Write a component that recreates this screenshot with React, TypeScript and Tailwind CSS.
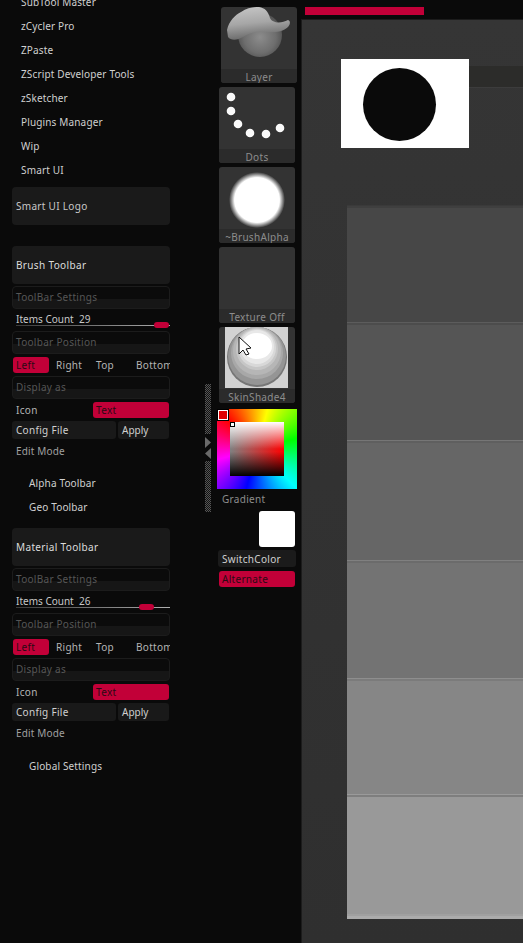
import React from "react";

const font = "font-['Noto_Sans','DejaVu_Sans',sans-serif]";

const plugins = ["zCycler Pro", "ZPaste", "ZScript Developer Tools", "zSketcher", "Plugins Manager", "Wip", "Smart UI"];

const Divider = ({ label }: { label: string }) => (
  <div className="h-[23px] rounded-[4px] border border-[#1c1c1c] bg-[linear-gradient(#0b0b0b_0_55%,#161616_55%)] pl-[3px] text-[10px] leading-[20px] tracking-[0.3px] text-[#565656]">
    {label}
  </div>
);

const ToolbarGroup = ({ title, count, thumb }: { title: string; count: number; thumb: string }) => (
  <div className="flex w-[158px] flex-col">
    <div className="flex h-[38px] items-center rounded-[4px] bg-[#1a1a1a] pl-1 text-[10px] tracking-[0.35px] text-[#dcdcdc]">{title}</div>
    <div className="mt-[2px]">
      <Divider label="ToolBar Settings" />
    </div>
    <div className="h-[22px] pl-1 pt-[3px] text-[10px] leading-[15px] text-[#c8c8c8]">
      Items Count&nbsp; {count}
      <div className="relative -mt-[2px] h-px bg-[linear-gradient(to_right,#3a3a3a,#b0b0b0)]">
        <div className={`absolute top-[-3px] h-[6px] w-[15px] rounded-[3px] bg-[#c20038] ${thumb}`} />
      </div>
    </div>
    <Divider label="Toolbar Position" />
    <div className="mt-[3px] flex h-4 items-center overflow-hidden text-[10px] tracking-[0.3px] text-[#b4b4b4]">
      <div className="ml-px h-4 w-9 shrink-0 rounded-[3px] bg-[#c20038] pl-[3px] leading-[16px] text-[#2a0a14]">Left</div>
      <div className="ml-[7px] w-10 shrink-0">Right</div>
      <div className="w-10 shrink-0">Top</div>
      <div className="shrink-0">Bottom</div>
    </div>
    <div className="mt-[3px]">
      <Divider label="Display as" />
    </div>
    <div className="mt-[3px] flex h-4 items-center text-[10px] tracking-[0.3px] text-[#b4b4b4]">
      <div className="w-[81px] pl-1">Icon</div>
      <div className="h-4 w-[76px] rounded-[3px] bg-[#c20038] pl-[3px] leading-[16px] text-[#2a0a14]">Text</div>
    </div>
    <div className="mt-[3px] flex h-[18px] gap-[2px] text-[10px] leading-[18px] text-[#d0d0d0]">
      <div className="w-[104px] rounded-[3px] bg-[#191919] pl-[4px] tracking-[0.3px]">Config File</div>
      <div className="w-[51px] rounded-[3px] bg-[#191919] pl-1">Apply</div>
    </div>
    <div className="h-[20px] pl-1 text-[10px] leading-[24px] tracking-[0.15px] text-[#a0a0a0]">Edit Mode</div>
  </div>
);

const PluginRow = ({ label, inset = "pl-[21px]" }: { label: string; inset?: string }) => (
  <div className={`flex h-6 items-center text-[10px] tracking-[0.15px] text-[#d0d0d0] ${inset}`}>{label}</div>
);

const Tile = ({ label, x = "", children }: { label: string; x?: string; children?: React.ReactNode }) => (
  <div className={`relative h-[76px] w-[76px] overflow-hidden rounded-[3px] bg-[#333333] ${x}`}>
    <div className="flex h-[62px] items-center justify-center">{children}</div>
    <div className="h-[14px] bg-[#2b2b2b] text-center text-[10px] leading-[16px] tracking-[0.3px] text-[#8d8d8d]">{label}</div>
  </div>
);

const Hatch = ({ className }: { className: string }) => (
  <div className={`w-[6px] bg-[repeating-conic-gradient(#555_0_25%,#111_0_50%)] bg-[length:2px_2px] ${className}`} />
);

const bands = [
  { h: "h-[117px]", c: "bg-[#474747]", a: "bg-[#3a3a3a]", b: "bg-[#3f3f3f]" },
  { h: "h-[118px]", c: "bg-[#555555]", a: "bg-[#5c5c5c]", b: "bg-[#4c4c4c]" },
  { h: "h-[120px]", c: "bg-[#666666]", a: "bg-[#767676]", b: "bg-[#5f5f5f]" },
  { h: "h-[118px]", c: "bg-[#737373]", a: "bg-[#808080]", b: "bg-[#6b6b6b]" },
  { h: "h-[116px]", c: "bg-[#868686]", a: "bg-[#8e8e8e]", b: "bg-[#7b7b7b]" },
  { h: "h-[125px]", c: "bg-[#999999]", a: "bg-[#9a9a9a]", b: "bg-[#7e7e7e]" },
];

export default function App() {
  return (
    <div className={`flex h-[943px] w-[523px] overflow-hidden bg-[#0a0a0a] ${font}`}>
      {/* left plugin list */}
      <div className="w-[205px] shrink-0 pl-3">
        <div className="-ml-3 -mt-[10px]">
          <PluginRow label="SubTool Master" />
          {plugins.map((p) => (
            <PluginRow key={p} label={p} />
          ))}
        </div>
        <div className="mt-[5px] flex h-[38px] w-[158px] items-center rounded-[4px] bg-[#1a1a1a] pl-1 text-[10px] tracking-[0.3px] text-[#c8c8c8]">Smart UI Logo</div>
        <div className="mt-[21px]">
          <ToolbarGroup title="Brush Toolbar" count={29} thumb="right-px" />
        </div>
        <div className="-ml-3 mt-[12px]">
          <PluginRow label="Alpha Toolbar" inset="pl-[29px]" />
          <PluginRow label="Geo Toolbar" inset="pl-[29px]" />
        </div>
        <div className="mt-[9px]">
          <ToolbarGroup title="Material Toolbar" count={26} thumb="left-[123px]" />
        </div>
        <div className="-ml-3 mt-[13px]">
          <PluginRow label="Global Settings" inset="pl-[29px]" />
        </div>
      </div>

      {/* splitter */}
      <div className="flex w-[14px] shrink-0 flex-col pt-[384px]">
        <Hatch className="h-[50px]" />
        <svg width="6" height="22" viewBox="0 0 6 22" className="mt-[3px]">
          <path d="M0 0 L6 5.5 L0 11 Z" fill="#6a6a6a" />
          <path d="M6 11 L0 16.5 L6 22 Z" fill="#6a6a6a" />
        </svg>
        <Hatch className="mt-[2px] h-[51px]" />
      </div>

      {/* brush tiles */}
      <div className="flex w-[82px] shrink-0 flex-col pt-[7px]">
        <Tile label="Layer" x="ml-[2px]">
          <svg width="76" height="62" viewBox="0 0 76 62">
            <defs>
              <linearGradient id="cap" x1="0" y1="0" x2="0.2" y2="1">
                <stop offset="0" stopColor="#c8c8c8" />
                <stop offset="0.55" stopColor="#a6a6a6" />
                <stop offset="1" stopColor="#6c6c6c" />
              </linearGradient>
              <radialGradient id="ball" cx="0.5" cy="0.55" r="0.6">
                <stop offset="0" stopColor="#8c8c8c" />
                <stop offset="0.6" stopColor="#6e6e6e" />
                <stop offset="1" stopColor="#464646" />
              </radialGradient>
            </defs>
            <circle cx="39" cy="28" r="22" fill="url(#ball)" />
            <path d="M6 23 C8 14 14 8 20 5 C26 1 32 0 38 0 C44 1 47 4 49 11 C51 16 60 17 67 13 C70 14 69 18 67 20 C62 25 52 26 42 25 C34 24 28 26 22 30 C17 33 10 34 7 30 Z" fill="url(#cap)" />
          </svg>
        </Tile>
        <div className="h-1" />
        <Tile label="Dots">
          <svg width="76" height="62" viewBox="0 0 76 62">
            {[[12, 10], [12, 24], [19, 37], [31, 46], [47, 47], [61, 41]].map(([cx, cy]) => (
              <circle key={cy} cx={cx} cy={cy} r="4.3" fill="#fafafa" />
            ))}
          </svg>
        </Tile>
        <div className="h-1" />
        <Tile label="~BrushAlpha">
          <div className="mt-1 h-[56px] w-[56px] rounded-full bg-[radial-gradient(circle_closest-side,#ffffff_0_80%,#333333_100%)]" />
        </Tile>
        <div className="h-1" />
        <Tile label="Texture Off" />
        <div className="h-1" />
        <Tile label="SkinShade4">
          <div className="-ml-px mt-[-1px] h-[61px] w-[63px] bg-[#d2d2d2]">
            <svg width="63" height="61" viewBox="0 0 63 61">
              <circle cx="32" cy="30" r="30" fill="#767676" />
              <circle cx="32" cy="29" r="29" fill="#959595" />
              <circle cx="32" cy="26" r="26" fill="#a8a8a8" />
              <circle cx="32" cy="24" r="24" fill="#b6b6b6" />
              <circle cx="32" cy="22" r="21" fill="#c6c6c6" />
              <circle cx="32" cy="21" r="19" fill="#d8d8d8" />
              <circle cx="32" cy="20" r="17" fill="#e8e8e8" />
              <ellipse cx="32" cy="19" rx="15" ry="13" fill="#ffffff" />
              <path d="M14 10 L14 27 L18 23 L21 28 L24 27 L21 22 L26 21 Z" fill="#ffffff" stroke="#111111" strokeWidth="1" />
            </svg>
          </div>
        </Tile>

        <div className="relative -ml-[2px] mt-[6px] h-[80px] w-[80px] bg-[conic-gradient(from_-45deg,#ff0000,#ffff00,#00ff00,#00ffff,#0000ff,#ff00ff,#ff0000)]">
          <div className="absolute left-[1px] top-[1px] h-[10px] w-[10px] border border-white bg-[#e00000] outline outline-1 outline-black" />
          <div className="absolute left-[13px] top-[13px] h-[54px] w-[54px] bg-[linear-gradient(to_bottom,#ffffff,transparent_50%,transparent_55%,#000000),linear-gradient(to_right,#808080,#ff0000)]" />
          <div className="absolute left-[13px] top-[13px] h-[5px] w-[5px] border border-black bg-white" />
        </div>
        <div className="mt-px h-5 pl-[3px] text-[10px] leading-[19px] tracking-[0.3px] text-[#8d8d8d]">Gradient</div>
        <div className="ml-[40px] mt-px h-9 w-9 rounded-[3px] bg-white" />
        <div className="-ml-px mt-[3px] h-[17px] w-[78px] rounded-[3px] bg-[#1b1b1b] pl-1 text-[10px] leading-[18px] tracking-[0.3px] text-[#d0d0d0]">SwitchColor</div>
        <div className="mt-[4px] h-4 w-[76px] rounded-[3px] bg-[#c20038] pl-[3px] text-[10px] leading-[16px] tracking-[0.3px] text-[#2a0a14]">Alternate</div>
      </div>

      {/* main area */}
      <div className="flex min-w-0 flex-1 flex-col">
        <div className="ml-[4px] mt-[7px] h-2 w-[119px] bg-[#c20038]" />
        <div className="relative mt-[4px] flex flex-1 flex-col border-l border-t border-[#1c1c1c] bg-[linear-gradient(#353535,#2f2f2f)]">
          <div className="absolute left-[39px] top-[39px] h-[89px] w-[128px] bg-white pl-[22px] pt-[9px]">
            <div className="h-[73px] w-[73px] rounded-full bg-[#0a0a0a]" />
          </div>
          <div className="ml-[60px] mt-[46px] h-[22px] border-b border-[#3c3c3c] bg-[#2c2c2a]" />
          <div className="ml-[45px] mt-[117px] flex flex-col">
            {bands.map((b) => (
              <div key={b.c} className={`${b.h} ${b.c}`}>
                <div className={`h-px ${b.a}`} />
                <div className={`h-[2px] ${b.b}`} />
              </div>
            ))}
            <div className="-mt-[5px] h-[2px] bg-[#a0a0a0]" />
            <div className="h-[3px] bg-[#ababab]" />
          </div>
        </div>
      </div>
    </div>
  );
}
